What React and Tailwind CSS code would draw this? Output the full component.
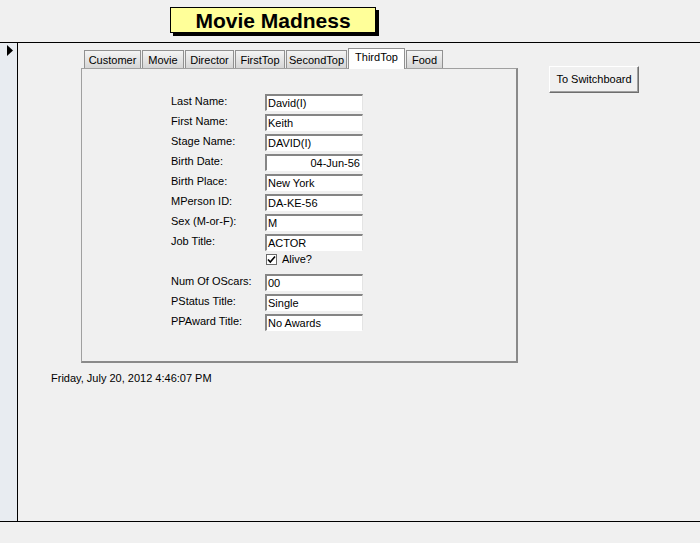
import React from "react";

const font = { fontFamily: '"Liberation Sans", Arial, sans-serif' };

const tabs = [
  { name: "Customer", w: "w-[57px]" },
  { name: "Movie", w: "w-[42px]" },
  { name: "Director", w: "w-[49px]" },
  { name: "FirstTop", w: "w-[50px]" },
  { name: "SecondTop", w: "w-[61px]" },
  { name: "ThirdTop", w: "w-[57px]", active: true },
  { name: "Food", w: "w-[37px]" },
];

const rows = [
  { label: "Last Name:", value: "David(I)" },
  { label: "First Name:", value: "Keith" },
  { label: "Stage Name:", value: "DAVID(I)" },
  { label: "Birth Date:", value: "04-Jun-56", right: true },
  { label: "Birth Place:", value: "New York" },
  { label: "MPerson ID:", value: "DA-KE-56" },
  { label: "Sex (M-or-F):", value: "M" },
  { label: "Job Title:", value: "ACTOR" },
  { check: true },
  { label: "Num Of OScars:", value: "00" },
  { label: "PStatus Title:", value: "Single" },
  { label: "PPAward Title:", value: "No Awards" },
];

function Field({ value, right }) {
  return (
    <div
      className={`w-[98px] h-[17px] bg-white border-t-2 border-l-2 border-r border-b border-t-[#858585] border-l-[#858585] border-r-[#e4e4e4] border-b-[#ffffff] text-[11px] leading-[14px] text-black pl-[1px] pr-[2px] ${
        right ? "text-right" : ""
      }`}
    >
      {value}
    </div>
  );
}

export default function App() {
  return (
    <div
      className="w-[700px] h-[543px] bg-[#f0f0f0] flex flex-col overflow-hidden text-black"
      style={font}
    >
      {/* header */}
      <div className="h-[43px] border-b border-black shrink-0 pt-[7px] pl-[170px]">
        <div className="w-[206px] h-[26px] bg-[#ffff99] border border-black shadow-[3px_3px_0_#000] flex items-center justify-center">
          <span className="text-[21px] font-bold leading-none text-black">
            Movie Madness
          </span>
        </div>
      </div>

      {/* body */}
      <div className="h-[479px] border-b border-black flex shrink-0">
        <div className="w-[18px] bg-[#e8ecf1] border-r border-black shrink-0 pt-[2px] pl-[7px]">
          <svg width="6" height="11" viewBox="0 0 6 11">
            <path d="M0 0 L6 5.5 L0 11 Z" fill="#000" />
          </svg>
        </div>

        <div className="flex items-start">
          <div className="flex flex-col pt-[4px] pl-[63px]">
            {/* tab strip */}
            <div className="flex items-end h-[21px] pl-[3px] gap-[1px]">
              {tabs.map((t) =>
                t.active ? (
                  <div
                    key={t.name}
                    className={`${t.w} h-[21px] translate-y-px relative z-10 bg-white border-t border-l border-r border-[#919191] text-[11px] flex justify-center pt-[2px] leading-[13px]`}
                  >
                    {t.name}
                  </div>
                ) : (
                  <div
                    key={t.name}
                    className={`${t.w} h-[18px] bg-gradient-to-b from-[#f4f4f4] to-[#d6d6d6] border-t border-l border-r border-[#919191] text-[11px] flex items-center justify-center leading-[13px] pt-[2px]`}
                  >
                    {t.name}
                  </div>
                )
              )}
            </div>

            {/* panel */}
            <div className="w-[437px] h-[295px] border-t border-l border-[#a0a0a0] border-r-2 border-b-2 border-r-[#8a8a8a] border-b-[#8a8a8a] pt-[25px] pl-[89px]">
              <div className="flex flex-col">
                {rows.map((r, i) =>
                  r.check ? (
                    <div key={i} className="h-[20px] flex items-start pl-[95px] pt-0">
                      <div className="w-[11px] h-[11px] bg-white border border-[#6a6a6a] flex items-center justify-center">
                        <svg width="9" height="9" viewBox="0 0 9 9">
                          <path
                            d="M1 4.5 L3.3 7 L8 1.5"
                            stroke="#000"
                            strokeWidth="1.6"
                            fill="none"
                          />
                        </svg>
                      </div>
                      <span className="text-[11px] leading-[13px] ml-[5px] -mt-[1px]">
                        Alive?
                      </span>
                    </div>
                  ) : (
                    <div key={i} className="h-[20px] flex items-start">
                      <div className="w-[94px] text-[11px] leading-[14px]">
                        {r.label}
                      </div>
                      <Field value={r.value} right={r.right} />
                    </div>
                  )
                )}
              </div>
            </div>

            <div className="text-[11px] leading-[13px] mt-[9px] -ml-[30px]">
              Friday, July 20, 2012 4:46:07 PM
            </div>
          </div>

          <div className="ml-[31px] mt-[23px] w-[90px] h-[27px] bg-[#f0f0f0] border border-t-white border-l-white border-r-[#6e6e6e] border-b-[#6e6e6e] shadow-[inset_-1px_-1px_0_#a0a0a0] flex items-center justify-center text-[11px]">
            To Switchboard
          </div>
        </div>
      </div>
    </div>
  );
}
